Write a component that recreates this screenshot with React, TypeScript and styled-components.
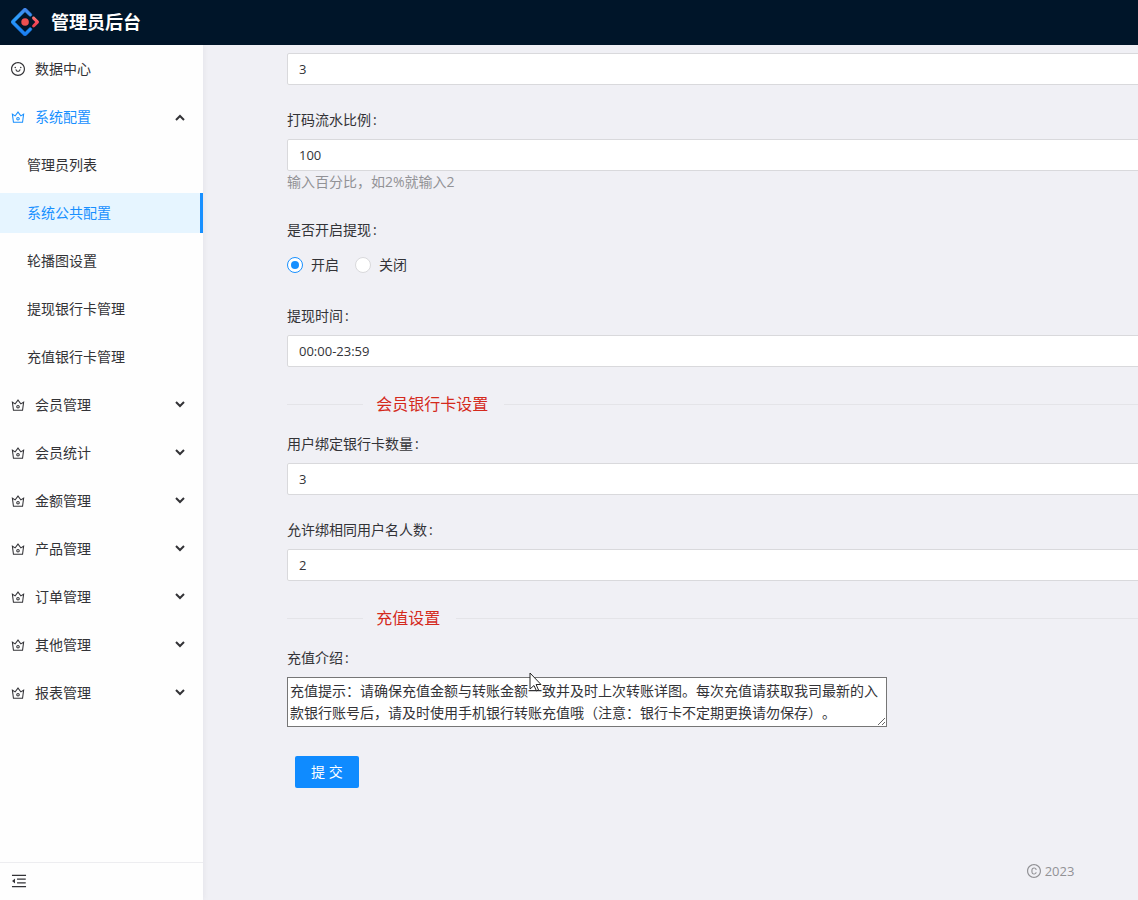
import React, { useState } from 'react';
import styled, { createGlobalStyle, css } from 'styled-components';
import {
  AiOutlineCopyright,
  AiOutlineCrown,
  AiOutlineMenuFold,
  AiOutlineSmile,
} from 'react-icons/ai';

const color = {
  primary: '#1890ff',
  header: '#001529',
  page: '#f0f0f5',
  text: '#333337',
  muted: '#929296',
  border: '#d9d9dc',
  selected: '#e6f5ff',
  danger: '#d4291c',
};

const fontStack = "'Open Sans', 'Noto Sans CJK SC', sans-serif";

const GlobalStyle = createGlobalStyle`
  *, *::before, *::after { box-sizing: border-box; }
  body {
    margin: 0;
    background: ${color.page};
    color: ${color.text};
    font: 14px/22px ${fontStack};
  }
  button, input, textarea { font: inherit; color: inherit; }
`;

const Page = styled.div`
  display: flex;
  flex-direction: column;
  height: 100vh;
  overflow: hidden;
`;

const Header = styled.header`
  display: flex;
  flex: none;
  align-items: center;
  gap: 12px;
  height: 45px;
  padding: 0 11px 2px;
  background: ${color.header};
`;

const Title = styled.h1`
  margin: 0;
  color: #fff;
  font-size: 18px;
  line-height: 42px;
  font-weight: 700;
`;

const Body = styled.div`
  display: flex;
  flex: 1;
  min-height: 0;
`;

const Sider = styled.aside`
  display: flex;
  flex: none;
  flex-direction: column;
  width: 203px;
  background: #fefefe;
  box-shadow: 1px 0 6px rgba(0, 21, 41, 0.05);
`;

const Menu = styled.ul`
  flex: 1;
  margin: 0;
  padding: 0;
  list-style: none;
`;

const SubMenu = styled.ul`
  margin: 0;
  padding: 4px 0 0;
  list-style: none;
`;

const MenuRow = styled.li`
  padding-top: 4px;
  margin-bottom: 4px;
`;

const menuEntry = css`
  display: flex;
  align-items: center;
  gap: 9px;
  width: 100%;
  height: 40px;
  text-decoration: none;
`;

const MenuLink = styled.a<{ $nested?: boolean; $selected?: boolean }>`
  ${menuEntry}
  padding-left: ${(p) => (p.$nested ? 27 : 10)}px;
  border-right: 3px solid ${(p) => (p.$selected ? color.primary : 'transparent')};
  background: ${(p) => (p.$selected ? color.selected : 'transparent')};
  color: ${(p) => (p.$selected ? color.primary : color.text)};
`;

const MenuToggle = styled.button<{ $active?: boolean }>`
  ${menuEntry}
  padding: 0 18px 0 10px;
  border: 0;
  background: none;
  color: ${(p) => (p.$active ? color.primary : color.text)};
  cursor: pointer;
`;

const Arrow = styled.svg<{ $open: boolean }>`
  margin-left: auto;
  color: ${color.text};
  transform: ${(p) => (p.$open ? 'rotate(180deg)' : 'none')};
`;

const CollapseButton = styled.button`
  display: flex;
  flex: none;
  align-items: center;
  height: 38px;
  padding: 0 10px 2px;
  border: 0;
  border-top: 1px solid #ededf0;
  background: none;
  cursor: pointer;
`;

const Content = styled.div`
  flex: 1;
  min-width: 0;
  overflow: hidden;
`;

const Canvas = styled.main`
  display: flex;
  flex-direction: column;
  min-width: 1694px;
  min-height: 100%;
  padding: 8px 84px 18px;
`;

const Form = styled.form`
  flex: 1;
`;

const Field = styled.div`
  margin-bottom: 24px;
`;

const Label = styled.label`
  display: block;
  width: fit-content;
  margin-bottom: 8px;

  &::after {
    content: ':';
    margin-left: 2px;
  }
`;

const GroupLabel = styled(Label).attrs({ as: 'div' })``;

const TextInput = styled.input`
  display: block;
  width: 100%;
  height: 32px;
  padding: 4px 11px;
  border: 1px solid ${color.border};
  border-radius: 2px;
  background: #fff;
  font-size: 13px;
  outline: none;
`;

const Help = styled.div`
  height: 24px;
  color: ${color.muted};
`;

const RadioGroup = styled.div`
  display: flex;
  align-items: center;
  gap: 16px;
  height: 32px;
`;

const RadioLabel = styled.label`
  display: flex;
  align-items: center;
  gap: 8px;
`;

const Radio = styled.input`
  display: grid;
  place-items: center;
  width: 16px;
  height: 16px;
  margin: 0;
  border: 1px solid ${color.border};
  border-radius: 50%;
  background: #fff;
  appearance: none;

  &:checked {
    border-color: ${color.primary};
  }

  &:checked::after {
    content: '';
    width: 8px;
    height: 8px;
    border-radius: 50%;
    background: ${color.primary};
  }
`;

const Divider = styled.h2`
  display: flex;
  align-items: center;
  margin: 0 0 16px;
  color: ${color.danger};
  font-size: 16px;
  line-height: 26px;
  font-weight: 400;

  &::before,
  &::after {
    content: '';
    height: 1px;
    background: #e4e4e8;
  }

  &::before {
    width: 5%;
    margin-right: 13px;
  }

  &::after {
    flex: 1;
    margin-left: 16px;
  }
`;

const TextareaWrap = styled.div`
  position: relative;
  width: 600px;
`;

const TextArea = styled.textarea`
  display: block;
  width: 100%;
  height: 50px;
  padding: 2px;
  border: 1px solid #767676;
  background: #fff;
  text-spacing-trim: space-all;
  resize: both;
  outline: none;
`;

const Pointer = styled.svg`
  position: absolute;
  left: 242px;
  top: -5px;
  pointer-events: none;
`;

const Submit = styled.button`
  height: 32px;
  margin: 5px 8px 0;
  padding: 0 16px;
  border: 0;
  border-radius: 2px;
  background: #0f8bff;
  color: #fff;
  cursor: pointer;
`;

const Footer = styled.footer`
  display: flex;
  align-items: center;
  justify-content: center;
  gap: 3px;
  color: ${color.muted};
  font-size: 13px;
`;

const Logo = () => (
  <svg width="28" height="28" viewBox="0 0 200 200" aria-hidden="true">
    <defs>
      <linearGradient id="logoBlue" x1="0.6" y1="0" x2="0.4" y2="1">
        <stop offset="0" stopColor="#4285eb" />
        <stop offset="0.4" stopColor="#2ea1ff" />
        <stop offset="1" stopColor="#1677ef" />
      </linearGradient>
      <linearGradient id="logoRed" x1="0.7" y1="0" x2="0.5" y2="1">
        <stop offset="0" stopColor="#fa8e7d" />
        <stop offset="0.5" stopColor="#f74a5c" />
        <stop offset="1" stopColor="#e5404a" />
      </linearGradient>
    </defs>
    <path
      fill="url(#logoBlue)"
      stroke="url(#logoBlue)"
      strokeWidth="4"
      d="M91.6 4.2L4.2 91.5c-4.7 4.7-4.7 12.3 0 17l87.4 87.3c4.7 4.7 12.3 4.7 17 0l36.6-36.6c4.2-4.2 4.2-11 0-15.2s-11-4.2-15.2 0l-27.8 27.7c-1.2 1.2-2.9 1.2-4.1 0L28.3 102c-1.2-1.2-1.2-2.9 0-4.1l69.8-69.8c1.2-1.2 2.9-1.2 4.1 0L130 55.9c4.2 4.2 11 4.2 15.2 0s4.2-11 0-15.2L108.6 4.1c-4.7-4.6-12.3-4.6-17 .1z"
    />
    <path
      fill="url(#logoRed)"
      d="M153.7 135.9c4.2 4.2 11 4.2 15.2 0l27.1-27.1c4.7-4.7 4.7-12.2 0-16.9l-27.3-27.2c-4.2-4.2-11.1-4.2-15.3 0s-4.2 11 0 15.2l18.4 18.5c1.2 1.2 1.2 2.9 0 4.1l-18.1 18.1c-4.2 4.2-4.2 11.1 0 15.3z"
    />
    <circle cx="100.5" cy="100.4" r="27" fill="#ee5050" />
  </svg>
);

const Chevron = ({ open }: { open: boolean }) => (
  <Arrow $open={open} width="10" height="10" viewBox="0 0 10 10" aria-hidden="true">
    <path d="M1 2l4 4 4-4" fill="none" stroke="currentColor" strokeWidth="2" />
  </Arrow>
);

const systemItems = ['管理员列表', '系统公共配置', '轮播图设置', '提现银行卡管理', '充值银行卡管理'];
const groups = ['会员管理', '会员统计', '金额管理', '产品管理', '订单管理', '其他管理', '报表管理'];

const introText =
  '充值提示：请确保充值金额与转账金额一致并及时上次转账详图。每次充值请获取我司最新的入款银行账号后，请及时使用手机银行转账充值哦（注意：银行卡不定期更换请勿保存）。';

export default function App() {
  const [systemOpen, setSystemOpen] = useState(true);
  const [selected, setSelected] = useState('系统公共配置');

  return (
    <Page lang="zh-CN">
      <GlobalStyle />
      <Header>
        <Logo />
        <Title>管理员后台</Title>
      </Header>
      <Body>
        <Sider>
          <Menu>
            <MenuRow>
              <MenuLink href="#data">
                <AiOutlineSmile size={16} />
                数据中心
              </MenuLink>
            </MenuRow>
            <MenuRow>
              <MenuToggle
                type="button"
                $active
                aria-expanded={systemOpen}
                onClick={() => setSystemOpen(!systemOpen)}
              >
                <AiOutlineCrown size={16} />
                系统配置
                <Chevron open={systemOpen} />
              </MenuToggle>
              {systemOpen && (
                <SubMenu>
                  {systemItems.map((name, i) => (
                    <MenuRow key={name}>
                      <MenuLink
                        href={`#system-${i}`}
                        $nested
                        $selected={name === selected}
                        onClick={() => setSelected(name)}
                      >
                        {name}
                      </MenuLink>
                    </MenuRow>
                  ))}
                </SubMenu>
              )}
            </MenuRow>
            {groups.map((name) => (
              <MenuRow key={name}>
                <MenuToggle type="button" aria-expanded={false}>
                  <AiOutlineCrown size={16} />
                  {name}
                  <Chevron open={false} />
                </MenuToggle>
              </MenuRow>
            ))}
          </Menu>
          <CollapseButton type="button" aria-label="收起菜单">
            <AiOutlineMenuFold size={18} />
          </CollapseButton>
        </Sider>
        <Content>
          <Canvas>
            <Form onSubmit={(e) => e.preventDefault()}>
              <Field>
                <TextInput aria-label="次数" defaultValue="3" />
              </Field>
              <Field>
                <Label htmlFor="ratio">打码流水比例</Label>
                <TextInput id="ratio" defaultValue="100" />
                <Help>输入百分比，如2%就输入2</Help>
              </Field>
              <Field role="radiogroup" aria-labelledby="withdraw-label">
                <GroupLabel id="withdraw-label">是否开启提现</GroupLabel>
                <RadioGroup>
                  <RadioLabel>
                    <Radio type="radio" name="withdraw" defaultChecked />
                    开启
                  </RadioLabel>
                  <RadioLabel>
                    <Radio type="radio" name="withdraw" />
                    关闭
                  </RadioLabel>
                </RadioGroup>
              </Field>
              <Field>
                <Label htmlFor="time">提现时间</Label>
                <TextInput id="time" defaultValue="00:00-23:59" />
              </Field>
              <Divider>会员银行卡设置</Divider>
              <Field>
                <Label htmlFor="cards">用户绑定银行卡数量</Label>
                <TextInput id="cards" defaultValue="3" />
              </Field>
              <Field>
                <Label htmlFor="same-name">允许绑相同用户名人数</Label>
                <TextInput id="same-name" defaultValue="2" />
              </Field>
              <Divider>充值设置</Divider>
              <Field>
                <Label htmlFor="intro">充值介绍</Label>
                <TextareaWrap>
                  <TextArea id="intro" spellCheck={false} defaultValue={introText} />
                  <Pointer width="13" height="21" viewBox="0 0 13 21" aria-hidden="true">
                    <path
                      d="M1 1v16l4-3.5 2.5 5.5 2-1-2.4-5.5H12z"
                      fill="#fff"
                      stroke="#222"
                      strokeWidth="1"
                    />
                  </Pointer>
                </TextareaWrap>
              </Field>
              <Submit type="submit">提 交</Submit>
            </Form>
            <Footer>
              <AiOutlineCopyright size={16} />
              <span>2023</span>
            </Footer>
          </Canvas>
        </Content>
      </Body>
    </Page>
  );
}
